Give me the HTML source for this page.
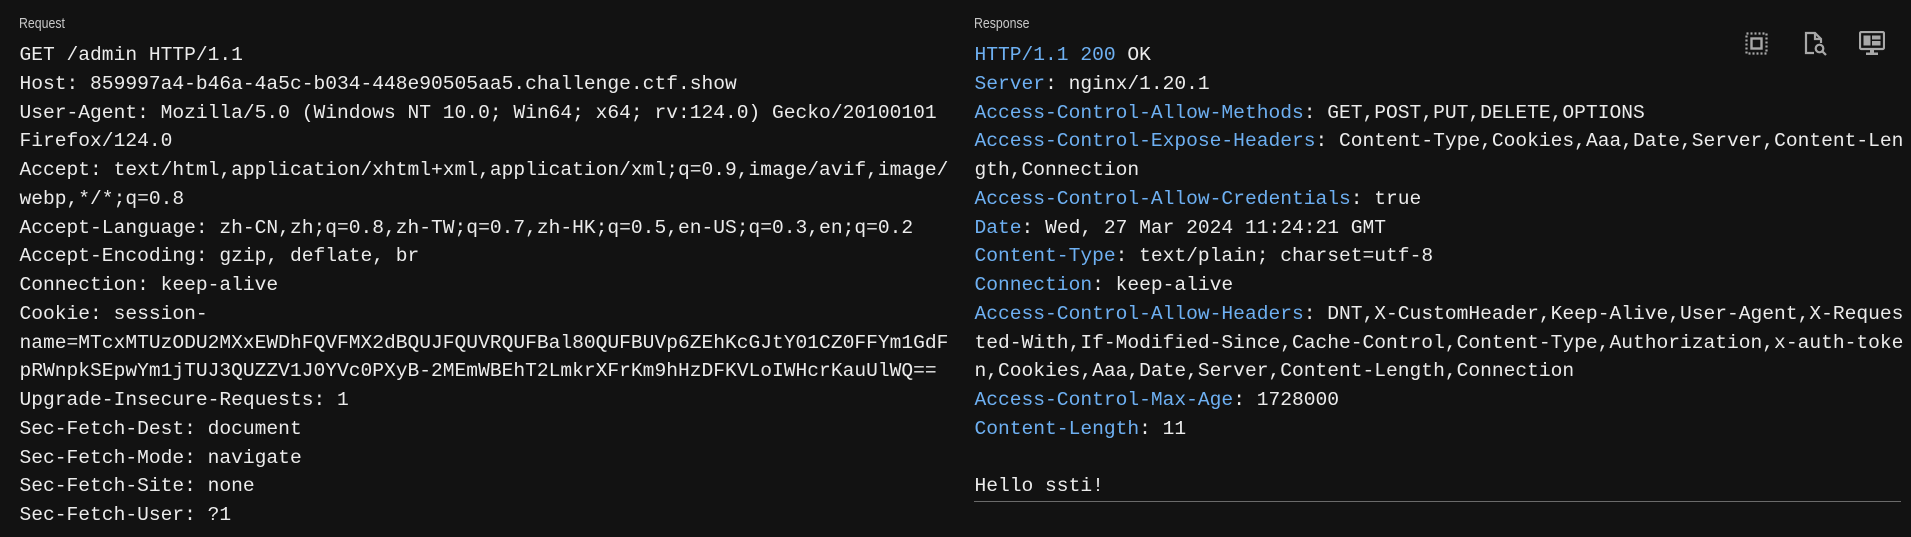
<!DOCTYPE html>
<html><head><meta charset="utf-8"><style>
html,body{margin:0;padding:0;background:#121212;width:1911px;height:537px;overflow:hidden}
.lbl{position:absolute;top:16px;font:14.5px "Liberation Sans",sans-serif;color:#c8c8c8;transform:scaleX(.85);transform-origin:left}
.col{position:absolute;top:41px;font:19.6px/28.75px "Liberation Mono",monospace;color:#ececec;white-space:pre}
.k{color:#6eb0f2}
.sep{position:absolute;left:974px;top:501px;width:927px;height:1px;background:#6a6a6a}
svg{position:absolute}
</style></head><body>
<div class="lbl" style="left:19px">Request</div>
<div class="lbl" style="left:974px">Response</div>
<div class="col" style="left:19.5px">GET /admin HTTP/1.1
Host: 859997a4-b46a-4a5c-b034-448e90505aa5.challenge.ctf.show
User-Agent: Mozilla/5.0 (Windows NT 10.0; Win64; x64; rv:124.0) Gecko/20100101
Firefox/124.0
Accept: text/html,application/xhtml+xml,application/xml;q=0.9,image/avif,image/
webp,*/*;q=0.8
Accept-Language: zh-CN,zh;q=0.8,zh-TW;q=0.7,zh-HK;q=0.5,en-US;q=0.3,en;q=0.2
Accept-Encoding: gzip, deflate, br
Connection: keep-alive
Cookie: session-
name=MTcxMTUzODU2MXxEWDhFQVFMX2dBQUJFQUVRQUFBal80QUFBUVp6ZEhKcGJtY01CZ0FFYm1GdF
pRWnpkSEpwYm1jTUJ3QUZZV1J0YVc0PXyB-2MEmWBEhT2LmkrXFrKm9hHzDFKVLoIWHcrKauUlWQ==
Upgrade-Insecure-Requests: 1
Sec-Fetch-Dest: document
Sec-Fetch-Mode: navigate
Sec-Fetch-Site: none
Sec-Fetch-User: ?1</div>
<div class="col" style="left:974.5px"><span class="k">HTTP/1.1 200</span> OK
<span class="k">Server</span>: nginx/1.20.1
<span class="k">Access-Control-Allow-Methods</span>: GET,POST,PUT,DELETE,OPTIONS
<span class="k">Access-Control-Expose-Headers</span>: Content-Type,Cookies,Aaa,Date,Server,Content-Len
gth,Connection
<span class="k">Access-Control-Allow-Credentials</span>: true
<span class="k">Date</span>: Wed, 27 Mar 2024 11:24:21 GMT
<span class="k">Content-Type</span>: text/plain; charset=utf-8
<span class="k">Connection</span>: keep-alive
<span class="k">Access-Control-Allow-Headers</span>: DNT,X-CustomHeader,Keep-Alive,User-Agent,X-Reques
ted-With,If-Modified-Since,Cache-Control,Content-Type,Authorization,x-auth-toke
n,Cookies,Aaa,Date,Server,Content-Length,Connection
<span class="k">Access-Control-Max-Age</span>: 1728000
<span class="k">Content-Length</span>: 11

Hello ssti!</div>
<div class="sep"></div>
<svg style="left:1745px;top:32px" width="23" height="23" viewBox="0 0 23 23" fill="none" stroke="#a8a8a8">
<rect x="1.5" y="1.5" width="20" height="20" stroke-width="2.2" stroke-dasharray="2 2"/>
<rect x="6.5" y="6.5" width="10" height="10" stroke-width="2.4"/>
</svg>
<svg style="left:1804px;top:31px" width="24" height="26" viewBox="0 0 24 26" fill="none" stroke="#a8a8a8" stroke-width="2.2">
<path d="M10 22H2V2h9l6 6v4"/><path d="M11 2v6h6"/>
<circle cx="15.5" cy="17.5" r="3.8"/><path d="M18.3 20.3L22 24"/>
</svg>
<svg style="left:1859px;top:31px" width="26" height="25" viewBox="0 0 26 25">
<rect x="1" y="1" width="24" height="17" rx="1.5" fill="none" stroke="#a8a8a8" stroke-width="2.2"/>
<rect x="4.5" y="4.5" width="7" height="10" fill="#a8a8a8"/>
<rect x="13" y="4.5" width="8.5" height="4" fill="#a8a8a8"/>
<rect x="13" y="10" width="8.5" height="4.5" fill="#a8a8a8"/>
<rect x="11" y="18" width="4" height="4" fill="#a8a8a8"/>
<rect x="7" y="21.5" width="12" height="2.5" fill="#a8a8a8"/>
</svg>
</body></html>
